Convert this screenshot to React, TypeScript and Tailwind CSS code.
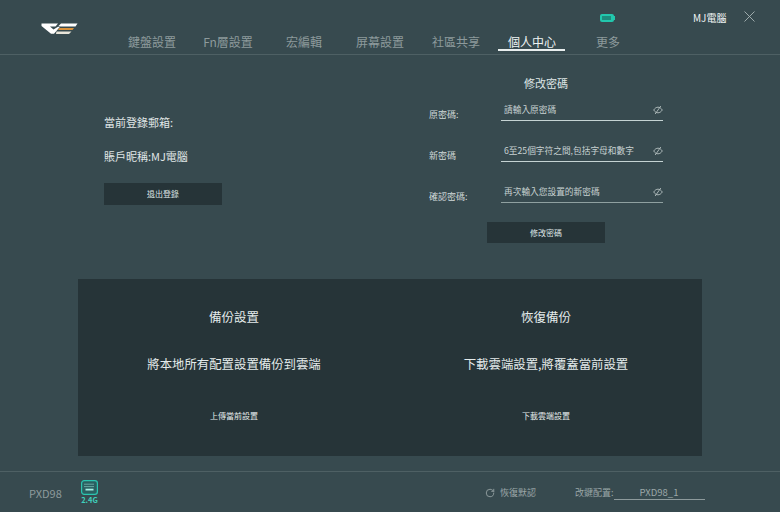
import { RotateCw } from "lucide-react"

const tabs = ["鍵盤設置", "Fn層設置", "宏編輯", "屏幕設置", "社區共享", "個人中心", "更多"]

const fields = [
  { label: "原密碼:", placeholder: "請輸入原密碼", line: "bg-[#c5d3d3]" },
  { label: "新密碼", placeholder: "6至25個字符之間,包括字母和數字", line: "bg-[#c5d3d3]" },
  { label: "確認密碼:", placeholder: "再次輸入您設置的新密碼", line: "bg-[#8fa0a0]" },
]

function EyeOff() {
  return (
    <svg width="10" height="10" viewBox="0 0 10 10" fill="none" stroke="#b4c0c0" strokeWidth="0.9">
      <path d="M0.7 5C2 3 3.4 2.2 5 2.2S8 3 9.3 5C8 7 6.6 7.8 5 7.8S2 7 0.7 5Z" />
      <path d="M7.8 1L2.2 9" />
    </svg>
  )
}

function Logo() {
  return (
    <svg width="37" height="12" viewBox="0 0 37 12">
      <path d="M0.5 0.5H17L14.5 3.5H9L12.5 6.5L17 3.8H19L13 10.8H10L0.5 3Z" fill="#ffffff" />
      <path d="M20 0.5H36.5L34.5 3.5H19.5L17.5 3Z" fill="#ffffff" />
      <path d="M18.5 5H33L31.5 7H17Z" fill="#d9923a" />
      <path d="M15.5 8.5H30.5L28 11H15Z" fill="#e8e4d8" />
    </svg>
  )
}

function KeyboardIcon() {
  return (
    <svg width="17" height="15" viewBox="0 0 17 15" fill="none">
      <rect x="0.6" y="0.6" width="15.8" height="13.8" rx="2.6" fill="#2a5f60" stroke="#2bc4b0" strokeWidth="1.2" />
      <path d="M3.5 4.2H13.5M3.5 6.6H13.5" stroke="#a5efe4" strokeWidth="1" strokeDasharray="1 1" />
      <path d="M4.5 9.6H12.5" stroke="#a5efe4" strokeWidth="1.8" />
    </svg>
  )
}

function BackupCard({ title, text, action }: { title: string; text: string; action: string }) {
  return (
    <div className="flex w-[312px] flex-col items-center text-[#e4ebeb]">
      <div className="mt-[28px] text-[12.5px] leading-[20px]">{title}</div>
      <div className="mt-[27px] text-[12.4px] leading-[20px]">{text}</div>
      <div className="mt-[36px] text-[8px] leading-[12px]">{action}</div>
    </div>
  )
}

export default function App() {
  return (
    <div className="flex h-[512px] w-[780px] flex-col overflow-hidden bg-[#374a4f] font-['Noto_Sans_CJK_TC','Noto_Sans',sans-serif]">
      <header className="relative h-[55px] shrink-0 border-b border-[#4e6064]">
        <div className="absolute left-[41px] top-[23px]">
          <Logo />
        </div>
        <nav className="flex pl-[114px] pt-[33px]">
          {tabs.map((tab) => {
            const active = tab === "個人中心"
            return (
              <div key={tab} className="relative flex h-[18px] w-[76px] justify-center">
                <span className={`text-[12px] leading-[18px] ${active ? "text-[#eef3f3]" : "text-[#8d9a9c]"}`}>{tab}</span>
                {active && <div className="absolute left-[4px] top-[16px] h-[2px] w-[67px] bg-[#e8eeee]" />}
              </div>
            )
          })}
        </nav>
        <div className="absolute left-[600px] top-[14px] flex items-center">
          <div className="flex h-[8px] w-[14px] items-center rounded-[2px] bg-[#22c7ad] px-[2px]">
            <div className="h-[4px] w-[9px] bg-[#1d8c7d]" />
          </div>
          <div className="h-[4px] w-[1px] bg-[#22c7ad]" />
        </div>
        <div className="absolute left-[693px] top-[10px] text-[10px] leading-[15px] text-[#eef3f3]">MJ電腦</div>
        <svg className="absolute left-[744px] top-[11px]" width="11" height="11" viewBox="0 0 11 11" stroke="#a9b5b6" strokeWidth="0.9">
          <path d="M0.5 0.5L10.5 10.5M10.5 0.5L0.5 10.5" />
        </svg>
      </header>

      <main className="flex h-[224px] shrink-0">
        <section className="w-[429px] shrink-0 pl-[104px] pt-[58px] text-[#e0e7e7]">
          <div className="text-[11px] leading-[18px]">當前登錄郵箱:</div>
          <div className="mt-[16px] text-[11px] leading-[18px]">賬戶昵稱:MJ電腦</div>
          <button className="mt-[18px] flex h-[22px] w-[118px] items-center justify-center bg-[#263438] text-[8px] text-[#dfe6e6]">退出登錄</button>
        </section>
        <section className="w-[234px] shrink-0 pt-[20px]">
          <div className="pl-[95px] text-[11px] leading-[16px] text-[#dfe6e6]">修改密碼</div>
          <div className="mt-[12px] flex flex-col gap-[25px]">
            {fields.map((f) => (
              <div key={f.label} className="relative flex h-[16px] items-center">
                <div className="absolute left-0 top-[5px] text-[9px] leading-[14px] text-[#d0d9d9]">{f.label}</div>
                <div className="ml-[72px] w-[162px]">
                  <div className="flex items-center justify-between pl-[3px]">
                    <span className="text-[8.7px] leading-[16px] text-[#c8d2d2]">{f.placeholder}</span>
                    <EyeOff />
                  </div>
                  <div className={`mt-[2px] h-[1px] w-[162px] ${f.line}`} />
                </div>
              </div>
            ))}
          </div>
          <button className="ml-[58px] mt-[21px] flex h-[21px] w-[118px] items-center justify-center bg-[#263438] text-[8px] text-[#dfe6e6]">修改密碼</button>
        </section>
      </main>

      <section className="mx-[78px] flex h-[177px] shrink-0 bg-[#263438]">
        <BackupCard title="備份設置" text="將本地所有配置設置備份到雲端" action="上傳當前設置" />
        <BackupCard title="恢復備份" text="下載雲端設置,將覆蓋當前設置" action="下載雲端設置" />
      </section>

      <footer className="relative mt-[15px] flex-1 border-t border-[#4e6064]">
        <div className="absolute left-[29px] top-[13px] text-[11px] leading-[16px] text-[#8d9a9c]">PXD98</div>
        <div className="absolute left-[81px] top-[8px] flex w-[17px] flex-col items-center">
          <KeyboardIcon />
          <div className="mt-[0px] whitespace-nowrap text-[7.5px] font-bold leading-[10px] text-[#3fd0bd]">2.4G</div>
        </div>
        <div className="absolute left-[485px] top-[14px] flex items-center gap-[5px] text-[#9ba7a8]">
          <RotateCw size={10} strokeWidth={2} />
          <span className="text-[9px] leading-[13px]">恢復默認</span>
        </div>
        <div className="absolute left-[575px] top-[14px] flex text-[#9ba7a8]">
          <span className="text-[9px] leading-[13px]">改鍵配置:</span>
          <div className="h-[14px] w-[91px] border-b border-[#8d9a9c] text-center text-[9.5px] leading-[13px]">PXD98_1</div>
        </div>
      </footer>
    </div>
  )
}
